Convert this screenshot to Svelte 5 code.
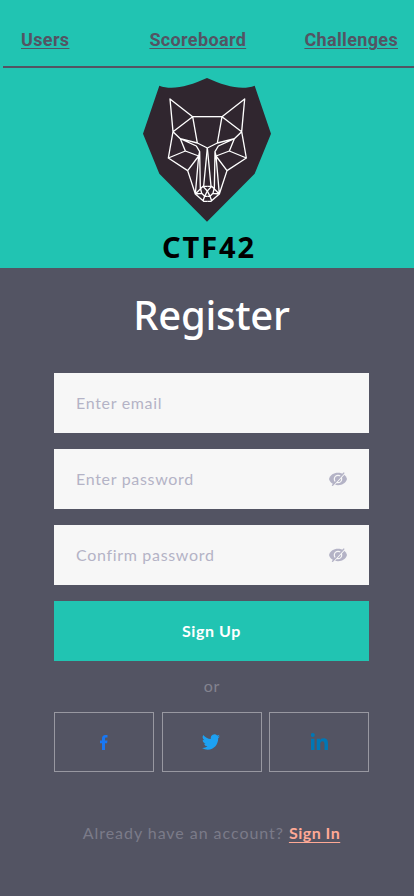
<script>
  const links = ['Users', 'Scoreboard', 'Challenges'];
  const fields = [
    { label: 'Enter email', type: 'email' },
    { label: 'Enter password', type: 'password' },
    { label: 'Confirm password', type: 'password' }
  ];
</script>

<main>
  <header>
    <nav>
      {#each links as link}
        <a href="#top">{link}</a>
      {/each}
    </nav>
    <div class="brand">
      <svg class="shield" width="140" height="154" viewBox="0 0 420 462">
        <path fill="#30262f" d="M67 47C105 62 155 49 210 24C265 49 315 62 353 47L402 191L353 311L210 455L67 311L18 191Z" />
        <g fill="none" stroke="#fff" stroke-width="4" stroke-linejoin="round">
          <path d="M167 140H255" />
          {#each ['', 'translate(422 0) scale(-1 1)'] as flip}
            <g transform={flip}>
              <path d="M167 140L99 87L108 185L167 140L181 219M108 185L94 264L152 302L185 258L145 243L94 264M108 185L130 206L145 243M211 234L181 219L130 206L178 228L188 245L185 258L175 372M152 302L175 372L200 394H211M188 245L190 357M211 234L200 348M175 372L198 349H211M198 349L211 363L203 379M191 357L194 370L203 379H211M175 372L194 370M203 379L198 392" />
            </g>
          {/each}
        </g>
      </svg>
      <div class="name">CTF42</div>
    </div>
  </header>

  <h1>Register</h1>

  <form>
    {#each fields as field}
      <label class="field">
        <input type={field.type} placeholder={field.label} />
        {#if field.type === 'password'}
          <svg width="20" height="14" viewBox="0 0 20 14">
            <path fill="#b4b3c6" d="M1 7C2.300 3 5.500.8 10 .8S17.700 3 19 7c-1.300 4-4.500 6.200-9 6.200S2.300 11 1 7Z" />
            <circle cx="10" cy="7" r="3.700" fill="none" stroke="#f7f7f7" stroke-width="1.200" />
            <path d="M5.200 14L17 1.400" stroke="#f7f7f7" stroke-width="1.200" />
            <path d="M4.200 13.700L16.200.6" stroke="#b4b3c6" stroke-width="1.400" />
          </svg>
        {/if}
      </label>
    {/each}
    <button class="submit" type="button">Sign Up</button>
  </form>

  <div class="or">or</div>

  <div class="social">
    <button type="button" aria-label="Facebook">
      <svg width="8" height="15" viewBox="0 0 8 15"><path fill="#1877f2" d="M2 15V8.200H0V5.500h2V3.700C2 1.300 3.300 0 5.400 0H7.500v2.500H6.200C5.200 2.500 5 3 5 3.800v1.700h2.500L7.100 8.200H5V15Z" /></svg>
    </button>
    <button type="button" aria-label="Twitter">
      <svg class="bird" width="18" height="16" viewBox="0 1.800 24 20.400" preserveAspectRatio="none"><path fill="#1da1f2" d="M23.95 4.57a10 10 0 0 1-2.82.77 4.96 4.96 0 0 0 2.16-2.72c-.95.55-2 .95-3.13 1.18a4.92 4.92 0 0 0-8.38 4.48C7.69 8.1 4.07 6.13 1.64 3.16a4.92 4.92 0 0 0 1.52 6.57 4.9 4.9 0 0 1-2.23-.61v.06a4.92 4.92 0 0 0 3.95 4.83 5 5 0 0 1-2.21.08 4.94 4.94 0 0 0 4.6 3.42A9.87 9.87 0 0 1 0 19.54a13.94 13.94 0 0 0 7.55 2.21c9.06 0 14.01-7.5 14.01-13.98 0-.21 0-.42-.02-.63a9.94 9.94 0 0 0 2.41-2.57Z" /></svg>
    </button>
    <button type="button" aria-label="LinkedIn">
      <svg class="in" width="17" height="17" viewBox="0 0 16 16"><path fill="#0077b5" d="M0 5.300h3.300V16H0ZM1.700 0a1.900 1.900 0 1 1 0 3.800 1.900 1.900 0 0 1 0-3.800ZM5.400 5.300h3.100v1.500C9 5.800 10.100 5 11.700 5 15 5 16 7 16 10v6h-3.300v-5.300c0-1.400-.3-2.900-1.900-2.900-1.700 0-2.100 1.300-2.100 2.800V16H5.400Z" /></svg>
    </button>
  </div>

  <p>Already have an account? <a href="#signin">Sign In</a></p>
</main>

<style>
  :global(body) { margin: 0; }
  main {
    width: 414px;
    height: 896px;
    overflow: hidden;
    background: #535463;
    font-family: Lato, 'Liberation Sans', sans-serif;
    display: flex;
    flex-direction: column;
  }
  header { height: 268px; background: #21c4b2; }
  nav {
    height: 68px;
    margin-left: 3px;
    padding: 29px 16px 0 18px;
    box-sizing: border-box;
    border-bottom: 2px solid #535463;
    display: flex;
  }
  nav a {
    font: 700 18px/22px Roboto, sans-serif;
    letter-spacing: 0.35px;
    color: #535463;
    text-decoration-thickness: 1px;
    text-underline-offset: 2px;
  }
  nav a:first-child { margin-right: 80px; }
  nav a:last-child { margin-left: auto; }
  .brand {
    display: flex;
    flex-direction: column;
    align-items: center;
    padding-top: 2px;
  }
  .shield { display: block; }
  .name {
    font: 700 29px/34px 'Noto Sans', sans-serif;
    letter-spacing: 1.9px;
    color: #000;
    margin: 6px 0 0 4px;
  }
  h1 {
    margin: 20px 0 0 9px;
    text-align: center;
    color: #fff;
    font: 500 40px/54px 'Noto Sans', sans-serif;
    letter-spacing: -0.25px;
  }
  form {
    margin: 31px 45px 0 54px;
    display: flex;
    flex-direction: column;
    gap: 16px;
  }
  .field {
    height: 60px;
    padding: 0 21px 0 22px;
    box-sizing: border-box;
    background: #f7f7f7;
    display: flex;
    align-items: center;
  }
  input {
    flex: 1;
    min-width: 0;
    padding: 0;
    border: 0;
    outline: 0;
    background: none;
    font: 400 16px/24px Lato, sans-serif;
    letter-spacing: 0.68px;
  }
  input::placeholder { color: #b4b3c6; opacity: 1; }
  .submit {
    height: 60px;
    padding: 0;
    border: 0;
    background: #21c4b2;
    color: #fff;
    font: 700 16px/24px Lato, sans-serif;
    letter-spacing: 0.6px;
  }
  .or {
    margin: 13px 0 0 10px;
    text-align: center;
    font-size: 16px;
    line-height: 24px;
    letter-spacing: 0.9px;
    color: #83838f;
  }
  .social {
    margin: 14px 45px 0 54px;
    display: flex;
    justify-content: space-between;
  }
  .social button {
    width: 100px;
    height: 60px;
    padding: 0;
    border: 1px solid #9898a1;
    background: none;
    display: flex;
    align-items: center;
    justify-content: center;
  }
  .bird { margin-right: 2px; }
  .in { margin-bottom: 2px; }
  p {
    margin: 49px 0 0 9px;
    text-align: center;
    font-size: 16px;
    line-height: 24px;
    letter-spacing: 0.95px;
    color: #7b7b89;
    white-space: nowrap;
  }
  p a {
    color: #ffa995;
    font-weight: 700;
    letter-spacing: 0.5px;
    text-decoration-thickness: 1px;
    text-underline-offset: 3px;
  }
</style>
